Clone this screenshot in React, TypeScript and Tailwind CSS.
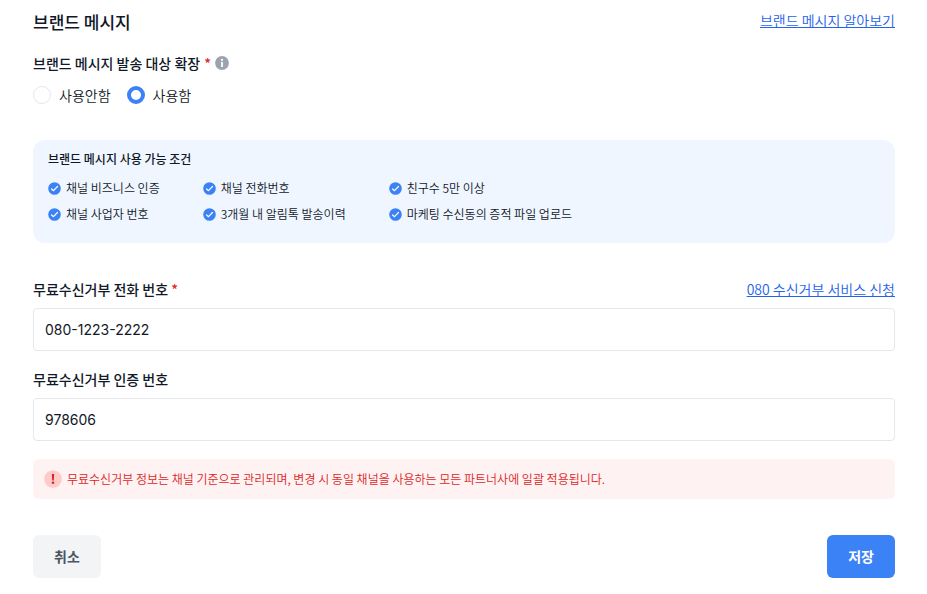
import React, { useState } from 'react';

const CheckBadge: React.FC = () => (
  <svg viewBox="0 0 13 13" className="w-[13px] h-[13px] mt-px shrink-0" aria-hidden="true">
    <circle cx="6.5" cy="6.5" r="6.3" fill="#3b82f6" />
    <path d="M3.6 7 5.5 8.7 9.5 4.5" fill="none" stroke="white" strokeWidth="1.2" strokeLinecap="round" strokeLinejoin="round" />
  </svg>
);

const InfoIcon: React.FC = () => (
  <svg viewBox="0 0 14 14" className="w-3.5 h-3.5" aria-hidden="true">
    <circle cx="7" cy="7" r="6.9" fill="#9ca3af" />
    <circle cx="7" cy="3.9" r="1.1" fill="white" />
    <path d="M7 6V11" fill="none" stroke="white" strokeWidth="1.8" />
  </svg>
);

const AlertIcon: React.FC = () => (
  <svg viewBox="0 0 18 18" className="w-[18px] h-[18px] shrink-0" aria-hidden="true">
    <circle cx="9" cy="9" r="8.8" fill="#fecaca" />
    <path d="M7.8 4H10.2L9.8 10.6H8.2Z" fill="#dc2626" />
    <circle cx="9" cy="12.7" r="1.3" fill="#dc2626" />
  </svg>
);

const conditions = [
  '채널 비즈니스 인증',
  '채널 전화번호',
  '친구수 5만 이상',
  '채널 사업자 번호',
  '3개월 내 알림톡 발송이력',
  '마케팅 수신동의 증적 파일 업로드',
];

const radioClass =
  'appearance-none w-[18px] h-[18px] rounded-full border border-[#e5e7eb] bg-white checked:border-4 checked:border-[#3b82f6]';
const inputClass =
  "block w-full mt-[9px] px-[11px] py-[11px] rounded border border-[#e5e7eb] bg-white text-sm leading-[19px] font-['Inter',sans-serif] focus:outline-none focus:border-[#3b82f6]";
const linkClass = 'text-sm leading-5 font-[350] text-[#2563eb] underline underline-offset-1';

const App: React.FC = () => {
  const [usage, setUsage] = useState('on');
  const [phone, setPhone] = useState('080-1223-2222');
  const [authCode, setAuthCode] = useState('978606');

  const handleSubmit = (e: React.FormEvent) => {
    e.preventDefault();
  };

  return (
    <form
      onSubmit={handleSubmit}
      className="bg-white text-[#111827] pl-[33px] pr-8 pt-2.5 pb-4 font-['Noto_Sans_CJK_KR',sans-serif]"
    >
      <div className="flex items-start justify-between">
        <h1 className="text-[17px] leading-6 font-medium">브랜드 메시지</h1>
        <a href="#" className={linkClass}>브랜드 메시지 알아보기</a>
      </div>

      <fieldset className="mt-[19px]">
        <legend className="flex items-center text-sm leading-5 font-medium">
          브랜드 메시지 발송 대상 확장
          <span className="mx-1 text-[#dc2626]">*</span>
          <InfoIcon />
        </legend>
        <div className="flex items-center gap-4 mt-3 text-sm leading-5 font-[350]">
          <label className="flex items-center gap-2">
            <input type="radio" name="usage" className={radioClass} checked={usage === 'off'} onChange={() => setUsage('off')} />
            사용안함
          </label>
          <label className="flex items-center gap-2">
            <input type="radio" name="usage" className={radioClass} checked={usage === 'on'} onChange={() => setUsage('on')} />
            사용함
          </label>
        </div>
      </fieldset>

      <section className="mt-[35px] px-[15px] pt-[9px] pb-5 rounded-xl bg-[#eff6ff]">
        <h2 className="text-xs leading-5 font-medium">브랜드 메시지 사용 가능 조건</h2>
        <ul className="grid grid-cols-[repeat(3,max-content)] gap-x-[43px] gap-y-2 mt-2.5 text-xs leading-[18px] font-[350]">
          {conditions.map((condition) => (
            <li key={condition} className="flex items-center gap-[5px]">
              <CheckBadge />
              {condition}
            </li>
          ))}
        </ul>
      </section>

      <div className="mt-9">
        <div className="flex items-center justify-between">
          <label htmlFor="phone" className="text-sm leading-5 font-medium">
            무료수신거부 전화 번호 <span className="text-[#dc2626]">*</span>
          </label>
          <a href="#" className={linkClass}>080 수신거부 서비스 신청</a>
        </div>
        <input id="phone" type="text" value={phone} onChange={(e) => setPhone(e.target.value)} className={inputClass} />
      </div>

      <div className="mt-[18px]">
        <label htmlFor="authCode" className="block text-sm leading-5 font-medium">무료수신거부 인증 번호</label>
        <input id="authCode" type="text" value={authCode} onChange={(e) => setAuthCode(e.target.value)} className={inputClass} />
      </div>

      <div className="flex items-center gap-[5px] mt-[18px] px-[11px] py-2.5 rounded-md bg-[#fef2f2] text-xs leading-5 font-[350] text-[#dc2626]">
        <AlertIcon />
        <p>무료수신거부 정보는 채널 기준으로 관리되며, 변경 시 동일 채널을 사용하는 모든 파트너사에 일괄 적용됩니다.</p>
      </div>

      <div className="flex justify-between mt-9">
        <button type="button" className="px-[21px] py-3 rounded-md bg-[#f3f4f6] text-sm leading-[19px] font-bold text-[#4b5563]">
          취소
        </button>
        <button type="submit" className="px-[21px] py-3 rounded-md bg-[#3b82f6] text-sm leading-[19px] font-bold text-white">
          저장
        </button>
      </div>
    </form>
  );
};

export default App;
